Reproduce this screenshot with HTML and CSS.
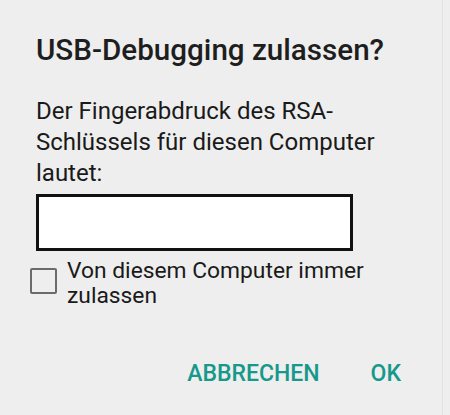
FILE: index.html
```html
<!DOCTYPE html>
<html lang="de">
<head>
<meta charset="utf-8">
<link rel="stylesheet" href="styles.css">
</head>
<body>
<div class="dialog">
  <h1 class="title">USB-Debugging zulassen?</h1>
  <p class="message">Der Fingerabdruck des RSA-Schlüssels für diesen Computer lautet:</p>
  <div class="fingerprint"></div>
  <label class="check-row">
    <span class="checkbox"></span>
    <span class="check-label">Von diesem Computer immer zulassen</span>
  </label>
  <div class="actions">
    <button class="btn">ABBRECHEN</button>
    <button class="btn">OK</button>
  </div>
</div>
</body>
</html>
```

FILE: styles.css
```css
html, body {
  margin: 0;
  padding: 0;
  background: #eeeeee;
}
.dialog {
  width: 443px;
  height: 415px;
  box-sizing: border-box;
  border-right: 1px solid #e2e2e2;
  background: #eeeeee;
  font-family: Roboto, "Noto Sans", sans-serif;
  padding: 32px 0 0 36px;
  display: flex;
  flex-direction: column;
}
.title {
  margin: 0;
  font-size: 29.6px;
  font-weight: 500;
  line-height: 36px;
  color: #1e1e1e;
}
.message {
  margin: 28px 0 0;
  font-size: 24px;
  font-weight: 400;
  line-height: 31px;
  color: #1a1a1a;
  width: 390px;
}
.fingerprint {
  margin-top: 5px;
  width: 317px;
  height: 57px;
  box-sizing: border-box;
  border: 3px solid #111;
  background: #ffffff;
}
.check-row {
  display: flex;
  align-items: flex-start;
  margin: 7px 0 0 -6px;
}
.checkbox {
  flex: none;
  width: 27px;
  height: 26px;
  box-sizing: border-box;
  border: 2.5px solid #6b6b6b;
  border-radius: 2px;
  margin-top: 10px;
}
.check-label {
  margin-left: 10px;
  font-size: 22.8px;
  line-height: 25px;
  color: #1a1a1a;
  width: 320px;
}
.actions {
  display: flex;
  justify-content: flex-end;
  gap: 51px;
  margin-top: 53px;
  padding-right: 41px;
}
.btn {
  border: none;
  background: none;
  padding: 0;
  font-family: Roboto, sans-serif;
  font-weight: 500;
  font-size: 23px;
  line-height: 26px;
  color: #16988a;
  letter-spacing: 0;
}
```
